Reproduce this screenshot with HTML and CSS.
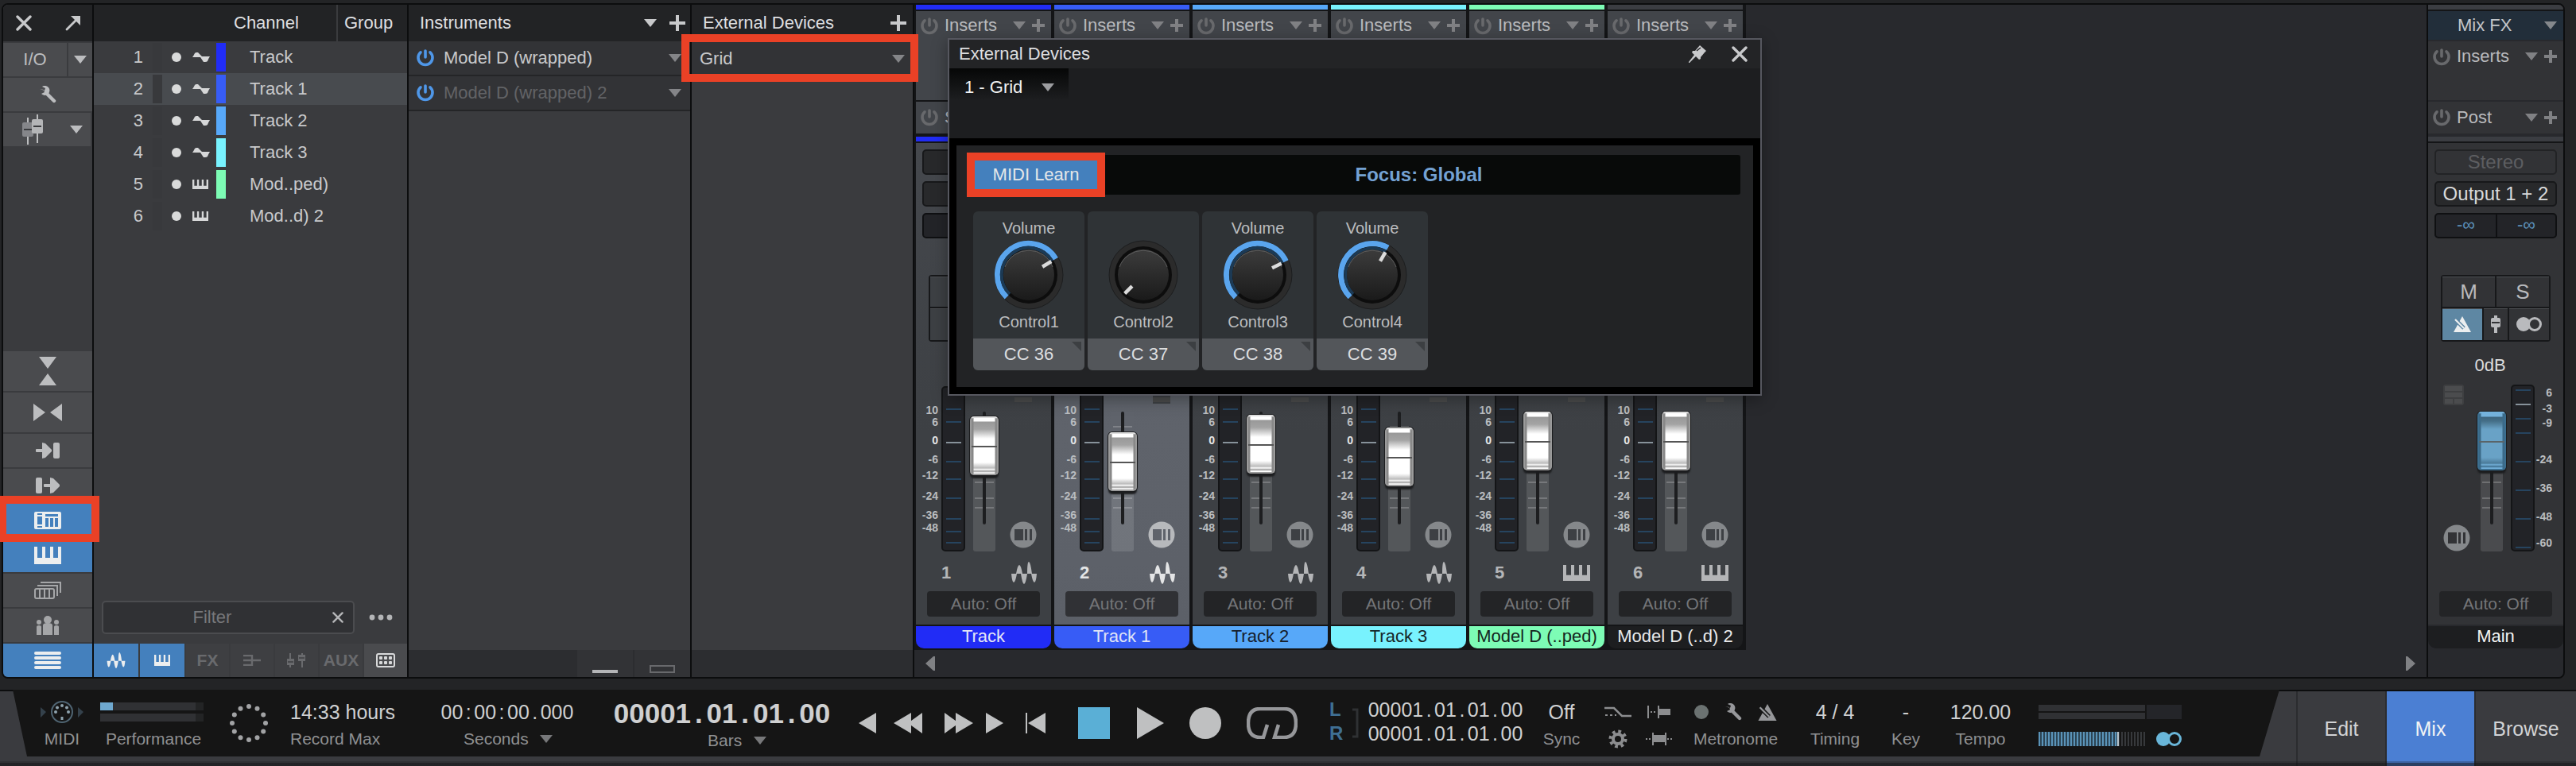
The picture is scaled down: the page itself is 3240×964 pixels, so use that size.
FILE: index.html
```html
<!DOCTYPE html>
<html lang="en">
<head>
<meta charset="utf-8">
<title>Mixer console</title>
<link rel="stylesheet" href="styles.css">
</head>
<body>
<svg class="sprite" aria-hidden="true">
  <symbol id="i-x" viewBox="0 0 20 20"><path d="M2 2 18 18M18 2 2 18" stroke="currentColor" stroke-width="3.4" stroke-linecap="round"/></symbol>
  <symbol id="i-detach" viewBox="0 0 20 20"><path d="M2 18 14 6" stroke="currentColor" stroke-width="2.8" stroke-linecap="round"/><path d="M7 1h12v12z" fill="currentColor"/></symbol>
  <symbol id="i-down" viewBox="0 0 16 10"><path d="M0 0H16L8 10z" fill="currentColor"/></symbol>
  <symbol id="i-plus" viewBox="0 0 16 16"><path d="M8 0V16M0 8H16" stroke="currentColor" stroke-width="4"/></symbol>
  <symbol id="i-plus-lg" viewBox="0 0 20 20"><path d="M10 0V20M0 10H20" stroke="currentColor" stroke-width="4"/></symbol>
  <symbol id="i-power" viewBox="0 0 22 22"><path d="M5 3.8A9 9 0 1 0 17 3.8M11 2V10" fill="none" stroke="currentColor" stroke-width="3.6" stroke-linecap="round"/></symbol>
  <symbol id="i-wrench" viewBox="0 0 22 22"><path d="M10 10 19 19" stroke="currentColor" stroke-width="4.4" stroke-linecap="round"/><path d="M1 4 6 5 7 8 3 10A6 6 0 1 0 4 1L8 3 7 6 1 4z" fill="currentColor"/></symbol>
  <symbol id="i-faders" viewBox="0 0 26 38"><path d="M7 4V38M19 0V36" stroke="currentColor" stroke-width="2"/><rect y="10" width="14" height="18" rx="2" fill="#85868a"/><path d="M2 19H12" stroke="#3a3b3e" stroke-width="2"/><rect x="12" y="6" width="14" height="18" rx="2" fill="#b4b5b7"/><path d="M14 15H24" stroke="#3a3b3e" stroke-width="2"/></symbol>
  <symbol id="i-narrow-v" viewBox="0 0 22 36"><path d="M0 0H22L11 15zM0 36H22L11 21z" fill="currentColor"/></symbol>
  <symbol id="i-narrow-h" viewBox="0 0 36 22"><path d="M0 0V22L15 11zM36 0V22L21 11z" fill="currentColor"/></symbol>
  <symbol id="i-in" viewBox="0 0 30 20"><path d="M0 9q0-1 1-1h7V0l4 1 8 8v2l-8 8-4 1v-8H1q-1 0-1-1z" fill="currentColor"/><rect x="22" width="8" height="20" rx="2" fill="currentColor"/></symbol>
  <symbol id="i-out" viewBox="0 0 30 20"><rect width="8" height="20" rx="2" fill="currentColor"/><path d="M10 9q0-1 1-1h7V0l4 1 8 8v2l-8 8-4 1v-8h-7q-1 0-1-1z" fill="currentColor"/></symbol>
  <symbol id="i-external" viewBox="0 0 34 22"><path fill-rule="evenodd" fill="currentColor" d="M2 0H32Q34 0 34 2V20Q34 22 32 22H2Q0 22 0 20V2Q0 0 2 0zM4 2V4H10V2zM4 6V16H10V6zM4 18V20H10V18zM14 3V6H30V3zM14 8V19H18V8zM20 8V19H24V8zM26 8V19H30V8z"/></symbol>
  <symbol id="i-keys" viewBox="0 0 34 22" preserveAspectRatio="none"><path d="M0 0H4V14H10V0H14V14H20V0H24V14H30V0H34V22H0z" fill="currentColor"/></symbol>
  <symbol id="i-racks" viewBox="0 0 34 22"><g fill="none" stroke="currentColor" stroke-width="2"><rect x="1" y="9" width="24" height="12" rx="2"/><path d="M7 9V21M13 9V21M19 9V21M4 5H29V18M8 1H33V14"/></g></symbol>
  <symbol id="i-people" viewBox="0 0 28 24"><g fill="currentColor"><circle cx="14" cy="5" r="5"/><path d="M8 24V12Q8 9 14 9T20 12V24z"/><circle cx="3" cy="8" r="3"/><path d="M0 24V14Q0 12 3 12T6 14V24z"/><circle cx="25" cy="8" r="3"/><path d="M22 24V14Q22 12 25 12T28 14V24z"/></g></symbol>
  <symbol id="i-list" viewBox="0 0 34 22"><path d="M2 2H32M2 8H32M2 14H32M2 20H32" stroke="currentColor" stroke-width="4" stroke-linecap="round"/></symbol>
  <symbol id="i-wave" viewBox="0 0 22 12"><path d="M0 6Q1 5 3 1 4 0 5 0H7L12 5H22Q20 8 19 11 18 12 16 12H14L10 6z" fill="currentColor"/></symbol>
  <symbol id="i-audio" viewBox="0 0 32 28"><path d="M0 15H6Q8 4 10 4T14 15H20Q20 0 22 0T26 15H32Q31 26 29 26T25 15H20Q18 28 16 28T12 15H7Q5 26 3 26T0 15z" fill="currentColor"/></symbol>
  <symbol id="i-bus" viewBox="0 0 22 14"><path d="M0 1H11V13H0M0 7H22" fill="none" stroke="currentColor" stroke-width="2.4"/></symbol>
  <symbol id="i-vca" viewBox="0 0 24 18"><path d="M4 0V18M19 0V18" stroke="currentColor" stroke-width="2"/><path d="M0 7H9V15H0zM14 2H23V10H14z" fill="currentColor"/><path d="M1 11H8M15 6H22" stroke="#3e3f42" stroke-width="1.4"/></symbol>
  <symbol id="i-grid" viewBox="0 0 24 18"><rect x="1" y="1" width="22" height="16" rx="2" fill="none" stroke="currentColor" stroke-width="2"/><g fill="currentColor"><rect x="4" y="4" width="4" height="4" rx="1"/><rect x="10" y="4" width="4" height="4" rx="1"/><rect x="16" y="4" width="4" height="4" rx="1"/><rect x="4" y="10" width="4" height="4" rx="1"/><rect x="10" y="10" width="4" height="4" rx="1"/><rect x="16" y="10" width="4" height="4" rx="1"/></g></symbol>
  <symbol id="i-dots" viewBox="0 0 30 8"><circle cx="4" cy="4" r="3.4" fill="currentColor"/><circle cx="15" cy="4" r="3.4" fill="currentColor"/><circle cx="26" cy="4" r="3.4" fill="currentColor"/></symbol>
  <symbol id="i-pin" viewBox="0 0 22 22"><path d="M14 0 22 7 20 9 15 15 15 17 13 18 9 14 1 22 0 22 0 21 7 12 4 9 5 7 8 7z" fill="currentColor"/><path d="M10 7 15 3" stroke="#222325" stroke-width="1.5"/></symbol>
  <symbol id="i-metro" viewBox="0 0 22 20"><path d="M11 0 22 20H0z" fill="currentColor"/><path d="M2 4 13 15" stroke="var(--cut,#5e87a3)" stroke-width="5"/><path d="M2 4 13 15" stroke="currentColor" stroke-width="2.2"/></symbol>
  <symbol id="i-fader" viewBox="0 0 12 22"><path d="M4 0H8V22H4z" fill="currentColor"/><rect y="3" width="12" height="12" rx="2" fill="currentColor"/><path d="M1 9H11" stroke="#323336" stroke-width="2"/></symbol>
  <symbol id="i-rings" viewBox="0 0 32 18"><circle cx="9" cy="9" r="9" fill="currentColor"/><circle cx="23" cy="9" r="7.5" fill="var(--hole,#323336)" stroke="currentColor" stroke-width="3"/></symbol>
  <symbol id="i-editor" viewBox="0 0 34 34"><circle cx="17" cy="17" r="16.5" fill="currentColor"/><path d="M6 10H17V24H6zM19 10H22V24H19zM25 10H28V24H25z" fill="var(--hole,#3d4044)"/></symbol>
  <symbol id="i-layers" viewBox="0 0 26 26"><rect width="26" height="26" rx="3" fill="#3e3f41"/><path d="M2 2H24V8H2zM2 10H24V16H2zM2 18H12V24H2zM14 18H24V24H14z" fill="#4b4c4e"/></symbol>
</svg>

<main class="console">
  <nav class="rail">
    <div class="rail__head">
      <button class="btn-plain" aria-label="Close"><svg width="20" height="20"><use href="#i-x"/></svg></button>
      <button class="btn-plain" aria-label="Detach"><svg width="20" height="20"><use href="#i-detach"/></svg></button>
    </div>
    <div class="rail__pair"><button class="tile tile--io">I/O</button><button class="tile" aria-label="I/O menu"><svg width="16" height="10"><use href="#i-down"/></svg></button></div>
    <button class="tile" aria-label="Options"><svg width="22" height="22"><use href="#i-wrench"/></svg></button>
    <button class="tile tile--split" aria-label="Console layout"><svg width="26" height="38"><use href="#i-faders"/></svg><svg width="16" height="10"><use href="#i-down"/></svg></button>
    <div class="rail__bottom">
      <button class="tile tile--tall" aria-label="Small height"><svg width="22" height="36"><use href="#i-narrow-v"/></svg></button>
      <button class="tile tile--tall" aria-label="Narrow"><svg width="36" height="22"><use href="#i-narrow-h"/></svg></button>
      <button class="tile" aria-label="Inputs"><svg width="30" height="20"><use href="#i-in"/></svg></button>
      <button class="tile" aria-label="Outputs"><svg width="30" height="20"><use href="#i-out"/></svg></button>
      <button class="tile tile--on marked" aria-label="External devices"><svg width="34" height="22"><use href="#i-external"/></svg><span class="mark mark--rail"></span></button>
      <button class="tile tile--on" aria-label="Instruments"><svg width="34" height="22"><use href="#i-keys"/></svg></button>
      <button class="tile tile--dim" aria-label="Scenes"><svg width="34" height="22"><use href="#i-racks"/></svg></button>
      <button class="tile tile--dim" aria-label="Groups"><svg width="28" height="24"><use href="#i-people"/></svg></button>
      <button class="tile tile--on" aria-label="Channel list"><svg width="34" height="22"><use href="#i-list"/></svg></button>
    </div>
  </nav>

  <section class="channels">
    <table class="list">
      <colgroup><col class="c-num"><col class="c-meter"><col class="c-dot"><col class="c-icon"><col class="c-color"><col class="c-name"><col></colgroup>
      <thead><tr><th colspan="5"></th><th class="list__name">Channel</th><th class="list__group">Group</th></tr></thead>
      <tbody id="channel-rows"></tbody>
    </table>
    <div class="filter">
      <div class="filter__box"><input type="text" placeholder="Filter" aria-label="Filter"><button class="btn-plain" aria-label="Clear filter"><svg width="14" height="14"><use href="#i-x"/></svg></button></div>
      <button class="btn-plain" aria-label="More"><svg width="30" height="8"><use href="#i-dots"/></svg></button>
    </div>
    <div class="types">
      <button class="tile tile--on" aria-label="Audio"><svg width="26" height="20"><use href="#i-audio"/></svg></button>
      <button class="tile tile--on" aria-label="Instruments"><svg width="20" height="14"><use href="#i-keys"/></svg></button>
      <button class="tile tile--off">FX</button>
      <button class="tile tile--off" aria-label="Bus"><svg width="22" height="14"><use href="#i-bus"/></svg></button>
      <button class="tile tile--off" aria-label="VCA"><svg width="24" height="18"><use href="#i-vca"/></svg></button>
      <button class="tile tile--off">AUX</button>
      <button class="tile" aria-label="Grid"><svg width="24" height="18"><use href="#i-grid"/></svg></button>
    </div>
  </section>

  <section class="rack rack--inst">
    <header class="rack__head"><h2>Instruments</h2><svg width="20" height="10"><use href="#i-down"/></svg><button class="btn-plain" aria-label="Add instrument"><svg width="20" height="20"><use href="#i-plus-lg"/></svg></button></header>
    <div class="device"><svg class="device__power" width="22" height="22"><use href="#i-power"/></svg><span>Model D (wrapped)</span><svg width="18" height="10"><use href="#i-down"/></svg></div>
    <div class="device device--dim"><svg class="device__power" width="22" height="22"><use href="#i-power"/></svg><span>Model D (wrapped) 2</span><svg width="18" height="10"><use href="#i-down"/></svg></div>
    <footer class="rack__foot"><button aria-label="Collapse"><i class="bar-solid"></i></button><button aria-label="Expand"><i class="bar-open"></i></button></footer>
  </section>

  <section class="rack rack--ext">
    <header class="rack__head"><h2>External Devices</h2><button class="btn-plain" aria-label="Add device"><svg width="20" height="20"><use href="#i-plus-lg"/></svg></button></header>
    <div class="device device--ext marked"><span>Grid</span><svg width="20" height="10"><use href="#i-down"/></svg><span class="mark mark--device"></span></div>
    <footer class="rack__foot"></footer>
  </section>

  <section class="mixer">
    <div class="strips" id="strips"></div>
    <div class="scroll"><button class="btn-plain" aria-label="Scroll left"><svg width="12" height="18" viewBox="0 0 12 18"><path d="M12 0V18H10L0 9 10 0z" fill="#808184"/></svg></button><button class="btn-plain" aria-label="Scroll right"><svg width="12" height="18" viewBox="0 0 12 18"><path d="M0 0V18H2L12 9 2 0z" fill="#808184"/></svg></button></div>
  </section>

  <section class="strip strip--main" id="main-strip"></section>
</main>

<section class="dialog" role="dialog" aria-label="External Devices">
  <header class="dialog__head"><h2>External Devices</h2><button class="btn-plain" aria-label="Pin"><svg width="22" height="22"><use href="#i-pin"/></svg></button><button class="btn-plain" aria-label="Close"><svg width="20" height="20"><use href="#i-x"/></svg></button></header>
  <div class="dialog__tabs"><div class="pick"><select aria-label="Device"><option>1 - Grid</option></select><svg width="16" height="10"><use href="#i-down"/></svg></div></div>
  <div class="dialog__body">
    <div class="focus"><button class="learn marked">MIDI Learn<span class="mark mark--learn"></span></button><strong>Focus: Global</strong></div>
    <div class="controls" id="controls"></div>
  </div>
</section>

<footer class="bottom">
  <div class="transport">
    <div class="cell cell--dim">
      <div class="row"><svg width="54" height="30" viewBox="0 0 54 30"><path d="M0 9 7 15 0 22zM47 9 54 15 47 22z" fill="#34414b"/><circle cx="27" cy="15" r="13" fill="none" stroke="#4f6472" stroke-width="2"/><g fill="#8fa3ae"><circle cx="27" cy="7" r="2"/><circle cx="21" cy="9.500" r="2"/><circle cx="33" cy="9.500" r="2"/><circle cx="19" cy="15" r="2"/><circle cx="35" cy="15" r="2"/><path d="M25.500 21h3v4h-3z"/></g></svg></div>
      <div class="row label">MIDI</div>
    </div>
    <div class="cell">
      <div class="row perf"><div class="perf__bar"><i class="perf__fill"></i></div><div class="perf__bar"></div></div>
      <div class="row label label--perf">Performance</div>
    </div>
    <div class="cell cell--mid"><svg class="spinner" width="50" height="50" viewBox="-25 -25 50 50" id="spinner"></svg></div>
    <div class="cell cell--left"><div class="row value">14:33 hours</div><div class="row label">Record Max</div></div>
    <div class="cell"><div class="row value digits">00:00:00.000</div><div class="row label pick-label"><select aria-label="Time format"><option>Seconds</option></select><svg width="16" height="10"><use href="#i-down"/></svg></div></div>
    <div class="cell cell--bars"><div class="row value value--big digits">00001.01.01.00</div><div class="row label pick-label pick-label--bars"><select aria-label="Position format"><option>Bars</option></select><svg width="16" height="10"><use href="#i-down"/></svg></div></div>
    <div class="keys">
      <div class="keys__pair">
        <button class="btn-plain" aria-label="Back"><svg width="22" height="26"><path d="M22 0V26L0 13z" fill="currentColor"/></svg></button>
        <button class="btn-plain" aria-label="Rewind"><svg width="36" height="26"><path d="M22 0V26L0 13zM36 0V26L18 13z" fill="currentColor"/></svg></button>
      </div>
      <div class="keys__pair keys__pair--tight">
        <button class="btn-plain" aria-label="Fast forward"><svg width="36" height="26"><path d="M0 0V26L18 13zM14 0V26L36 13z" fill="currentColor"/></svg></button>
        <button class="btn-plain" aria-label="Forward"><svg width="22" height="26"><path d="M0 0V26L22 13z" fill="currentColor"/></svg></button>
      </div>
      <button class="btn-plain" aria-label="Return to zero"><svg width="25" height="26"><path d="M0 0H2V26H0zM25 0V26L3 13z" fill="currentColor"/></svg></button>
      <div class="keys__main">
        <button class="btn-plain" aria-label="Stop"><svg width="40" height="40"><path d="M0 0H40V40H0z" fill="#5aafd6"/></svg></button>
        <button class="btn-plain" aria-label="Play"><svg width="36" height="40"><path d="M2 0 36 20 2 40z" fill="currentColor"/></svg></button>
        <button class="btn-plain" aria-label="Record"><svg width="40" height="40"><circle cx="20" cy="20" r="20" fill="currentColor"/></svg></button>
        <button class="btn-plain" aria-label="Loop"><svg width="64" height="40"><path d="M26 22 21 38H17Q2 38 2 20T17 2H47Q62 2 62 20T47 38H35L40 22" fill="none" stroke="#96979a" stroke-width="4.500"/></svg></button>
      </div>
    </div>
    <div class="cell cell--lr"><div class="lr"><span>L</span><span>R</span></div><svg width="8" height="38"><path d="M0 2H6V36H0" fill="none" stroke="#2f3133" stroke-width="3"/></svg></div>
    <div class="cell cell--pair"><div class="row value digits">00001.01.01.00</div><div class="row value digits">00001.01.01.00</div></div>
    <div class="cell"><div class="row value">Off</div><div class="row label">Sync</div></div>
    <div class="cell cell--dim">
      <div class="row"><svg width="34" height="14"><path d="M0 2H12L22 12H34" fill="none" stroke="#8c8d8f" stroke-width="2.500"/><path d="M1 11H15" stroke="#8c8d8f" stroke-width="2" stroke-dasharray="3 3"/></svg></div>
      <div class="row"><svg width="24" height="24" viewBox="-12 -12 24 24"><circle r="6" fill="none" stroke="#8c8d8f" stroke-width="4"/><circle r="9.500" fill="none" stroke="#8c8d8f" stroke-width="4" stroke-dasharray="3.700 3.760"/></svg></div>
    </div>
    <div class="cell cell--dim">
      <div class="row"><svg width="30" height="18"><path d="M1 1V17M14 1V17" stroke="#8c8d8f" stroke-width="2"/><path d="M4 9H12" stroke="#8c8d8f" stroke-width="2" stroke-dasharray="2 2"/><path d="M15 5H29V13H15z" fill="#8c8d8f"/></svg></div>
      <div class="row"><svg width="34" height="18"><path d="M9 1V17M25 1V17" stroke="#8c8d8f" stroke-width="2"/><path d="M0 9H8M27 9H34" stroke="#8c8d8f" stroke-width="2" stroke-dasharray="2 2"/><path d="M9 4H25V13H9z" fill="#8c8d8f"/></svg></div>
    </div>
    <div class="cell">
      <div class="row metro"><svg width="18" height="18"><circle cx="9" cy="9" r="9" fill="#6b7271"/></svg><svg width="22" height="22"><use href="#i-wrench"/></svg><svg class="metro__icon" width="24" height="21"><use href="#i-metro"/></svg></div>
      <div class="row label">Metronome</div>
    </div>
    <div class="cell"><div class="row value">4 / 4</div><div class="row label">Timing</div></div>
    <div class="cell"><div class="row value">-</div><div class="row label">Key</div></div>
    <div class="cell"><div class="row value">120.00</div><div class="row label">Tempo</div></div>
    <div class="cell cell--left levels">
      <div class="row levels__top"><div class="levels__bars"><i></i><i></i></div><i class="levels__clip"></i></div>
      <div class="row levels__low"><div class="stripes"><i class="stripes__on"></i></div><svg class="levels__rings" width="34" height="18"><use href="#i-rings"/></svg></div>
    </div>
  </div>
  <nav class="views"><button>Edit</button><button class="views__on">Mix</button><button>Browse</button></nav>
</footer>
<script src="app.js"></script>
</body>
</html>
```

FILE: styles.css
```css
:root {
  --text: #c8c9cb;
  --line: #111214;
  --panel: #3a3b3e;
  --tile: #4a4b4e;
  --blue: #4480bd;
  --mark: #ea4126;
}
* { box-sizing: border-box; }
body {
  margin: 0;
  min-height: 100vh;
  display: flex;
  flex-direction: column;
  padding-top: 4px;
  background: #232426;
  color: var(--text);
  font: 22px/26px "Liberation Sans", Arial, sans-serif;
  position: relative;
  overflow: hidden;
}
h2 { margin: 0; font: inherit; color: #dedfe0; }
svg { display: block; flex: none; }
button, select, input { font: inherit; color: inherit; border: 0; padding: 0; margin: 0; background: none; }
select { appearance: none; }
.sprite { position: absolute; width: 0; height: 0; }
.btn-plain { display: grid; place-items: center; }
.marked { position: relative; }
.mark { position: absolute; z-index: 5; border: 10px solid var(--mark); pointer-events: none; }
.mark--rail { inset: -10px -9px -6px -4px; border-left-width: 8px; }
.mark--device { inset: -9px -7px -7px -13px; }
.mark--learn { inset: -10px; }

.console {
  flex: 1;
  display: flex;
  margin: 0 14px 14px 2px;
  border: 2px solid #0c0d0e;
  border-radius: 8px;
  background: #28292d;
}

.rail { width: 112px; display: flex; flex-direction: column; gap: 2px; background: var(--panel); border-radius: 6px 0 0 6px; }
.rail__head { height: 46px; display: flex; align-items: center; justify-content: space-between; padding: 0 14px 0 16px; background: #222325; border-radius: 6px 0 0; }
.rail__pair { display: grid; grid-template-columns: 80px 1fr; gap: 2px; }
.rail__bottom { margin-top: auto; display: flex; flex-direction: column; gap: 2px; }
.rail__bottom .tile:last-child { border-radius: 0 0 0 6px; }
.tile { height: 42px; display: flex; align-items: center; justify-content: center; background: var(--tile); color: #bcbdbf; }
.tile--tall { height: 50px; }
.tile--split { gap: 34px; padding-left: 14px; margin-right: 2px; }
.tile--dim { color: #a5a6a8; }
.tile--on { background: var(--blue); color: #eceeef; }
.tile--off { background: #3e3f42; color: #696a6d; font-weight: bold; }

.channels { width: 396px; display: flex; flex-direction: column; background: var(--panel); border: solid #0c0d0e; border-width: 0 0 0 2px; }
.list { border-collapse: collapse; table-layout: fixed; width: 100%; text-align: left; }
.list th { height: 46px; padding: 0; background: #222325; color: #dedfe0; font-weight: normal; }
.list td { height: 40px; padding: 0; }
.list svg { color: #d6d7d8; }
.list .list__name { padding-left: 6px; }
.list td.list__name { padding-left: 26px; }
.list .list__group { padding-left: 8px; border-left: 2px solid #3a3b3e; }
.list__num { text-align: right; }
.list td.list__num { padding-right: 10px; }
.list__sel { background: #484b4f; }
.c-num { width: 72px; }
.c-meter { width: 16px; }
.c-dot { width: 32px; }
.c-icon { width: 30px; }
.c-color { width: 20px; }
.c-name { width: 136px; }
.meter-slot, .swatch { display: block; width: 12px; height: 36px; margin: 0 auto; }
.meter-slot { background: #38393c; }
.dot { display: block; width: 12px; height: 12px; border-radius: 50%; margin: 0 auto; background: #d9dada; }
.list__icon svg { margin-left: 4px; }
.filter { margin-top: auto; padding: 0 18px 12px 10px; display: flex; align-items: center; justify-content: space-between; color: #b4b5b7; }
.filter__box { width: 318px; height: 42px; display: flex; align-items: center; padding-right: 12px; border: 2px solid #4b4c4f; border-radius: 5px; background: #303134; }
.filter__box input { flex: 1; min-width: 0; padding-right: 14px; text-align: center; outline: 0; }
.filter__box input::placeholder { color: #77787b; opacity: 1; }
.types { display: flex; gap: 2px; font-size: 21px; }
.types .tile { width: 54px; }
.types .tile--on { width: 56px; }
.types .tile:last-child { flex: 1; color: #d8d9da; }

.rack { display: flex; flex-direction: column; background: var(--panel); border-left: 2px solid #0c0d0e; }
.rack--inst { width: 356px; }
.rack--ext { width: 280px; }
.rack__head { height: 46px; display: flex; align-items: center; gap: 14px; padding: 0 6px 0 14px; background: #222325; }
.rack__head h2, .device span:not(.mark) { flex: 1; }
.rack--ext .rack__head { padding-right: 8px; }
.device { height: 44px; display: flex; align-items: center; gap: 12px; padding: 0 10px; border-bottom: 2px solid #242527; background: #323336; }
.device > svg:last-of-type { color: #848588; }
.device--dim { color: #626366; }
.device .device__power { color: #4f97e8; }
.device--ext { padding: 0 8px 0 10px; border-bottom: 0; }
.rack__foot { margin-top: auto; height: 34px; display: flex; justify-content: flex-end; gap: 2px; background: #2c2d30; }
.rack__foot button { width: 70px; display: flex; align-items: flex-end; justify-content: center; padding-bottom: 5px; background: #323336; }
.bar-solid { width: 32px; height: 4px; background: #b4b5b7; }
.bar-open { width: 32px; height: 10px; border: 2px solid #68696c; }

.mixer { flex: 1; display: flex; flex-direction: column; border: solid #0c0d0e; border-width: 0 2px; min-width: 0; }
.strips { flex: 1; display: flex; align-self: flex-start; gap: 4px; padding: 0 4px 2px 2px; background: #141517; }
.scroll { height: 34px; padding: 0 14px; display: flex; justify-content: space-between; align-items: center; background: #28292d; }

.strip { width: 170px; display: flex; flex-direction: column; --bg: #3d4044; --top: #42454a; color: #b9babd; }
.strip--sel { --bg: #5f636b; }
.strip--main { --bg: #323336; --top: #323336; background: #28292d; border-radius: 0 6px 6px 0; overflow: hidden; }
.strip__band { height: 8px; border-bottom: 2px solid #141517; background: var(--c, #3b3d42); }
.slot { display: flex; align-items: center; gap: 8px; height: 40px; padding: 0 8px 0 6px; background: var(--top); }
.slot > span { flex: 1; }
.slot > svg { color: #808184; }
.slot > svg:first-child { color: #68696c; }
.slot--tall { height: 112px; align-items: flex-start; padding-top: 5px; }
.slot--tall > svg { margin-top: 8px; }
.slot--tall > svg:first-child { margin-top: 3px; }
.slot--tall > svg:last-child { margin-top: 5px; }
.slot + .slot { margin-top: 2px; }
.strip--main .slot--tall { height: 74px; margin-top: 2px; padding-top: 6px; }
.mixfx { height: 36px; display: flex; align-items: center; padding: 0 8px 0 37px; background: #222e3a; color: #c3c6ca; }
.mixfx span { flex: 1; }
.mixfx svg { color: #85888c; }
.strip__band--low { margin-top: 4px; }
.strip__body { flex: 1; display: flex; flex-direction: column; padding-top: 8px; background: linear-gradient(#45484d, var(--bg) 60%); }
.strip--sel .strip__body { background: linear-gradient(#555961, var(--bg) 60%, #5c6068); }
.strip--main .strip__body { background: var(--bg); }
.io { display: flex; flex-direction: column; gap: 8px; padding: 0 8px; color: #d8d9da; font-size: 24px; }
.box { height: 32px; display: grid; grid-auto-flow: column; grid-auto-columns: 1fr; border: 2px solid #17181a; border-radius: 5px; background: #28292b; text-align: center; }
.box select { text-align: center; text-align-last: center; width: 100%; }
.box--faint { color: #5d5e61; background: none; border-color: #222325; }
.box--pan { background: #232428; border-color: #0f1012; color: #5b8fb8; font-size: 22px; line-height: 26px; }
.box--pan span + span { border-left: 2px solid #0f1012; }
.switches { margin: 46px 16px 0; display: grid; gap: 2px; padding: 2px; background: #17181a; border-radius: 4px; color: #b9babd; font-size: 26px; }
.switches__row { display: grid; gap: 2px; grid-template-columns: 1fr 1fr; height: 38px; }
.switches__row + .switches__row { height: 40px; grid-template-columns: 50px 30px 1fr; }
.switches button, .switches i { display: grid; place-items: center; background: var(--bg); box-shadow: inset 0 1px #4d4f53; }
.switches .switches__on { background: #5e87a3; color: #eceeef; }
.db { margin-top: auto; height: 26px; margin-bottom: 11px; text-align: center; padding-right: 14px; color: #dcdddd; }
.desk { height: 210px; display: grid; grid-template-columns: 28px 32px 36px 1fr; column-gap: 4px; font: bold 14px/14px "Liberation Sans", Arial, sans-serif; }
.scale { display: grid; grid-template-rows: 16px 14px 32px 16px 24px 28px 20px 12px; padding-top: 24px; align-content: start; align-items: center; justify-items: end; color: #b9bcbf; }
.scale b { color: #e4e5e6; }
.meter { margin-top: 2px; }
.fader { position: relative; }
.fader svg { position: absolute; inset: 0; }
.fader input { position: absolute; left: 0; top: 34px; width: 36px; height: 176px; appearance: none; writing-mode: vertical-lr; direction: rtl; background: none; }
.fader input::-webkit-slider-runnable-track { width: 36px; height: 176px; background: none; }
.fader input::-webkit-slider-thumb {
  appearance: none; width: 36px; height: 74px; border-radius: 5px;
  border: 2px solid #9b9b9b; border-top: 2px solid #ddd;
  background:
    linear-gradient(#555, #555) 0 35px / 100% 2px no-repeat,
    linear-gradient(90deg, #888 0 2px, transparent 3px 29px, #888 30px),
    linear-gradient(#fff 0 4px, #999 5px, #a4a4a4 14px, #fff 26px, #fff 56px, #bbb 63px, #fff 65px, #999 67px, #fff 69px);
  box-shadow: 0 0 0 1px #1c1d1f, 0 4px 2px #1c1d1f;
}
.strip--main .fader input::-webkit-slider-thumb {
  border-color: #3c6f90; border-top-color: #74b2dc;
  background:
    linear-gradient(#5a6468, #5a6468) 0 35px / 100% 2px no-repeat,
    linear-gradient(90deg, #3b6a88 0 2px, transparent 3px 29px, #3b6a88 30px),
    linear-gradient(#74b2dc 0 4px, #3d657e 5px, #456f88 10px, #69a2c6 20px, #69a2c6 56px, #4b7b99 63px, #74b2dc 65px, #3b6a88 67px, #74b2dc 69px);
}
.side { display: flex; flex-direction: column; align-items: center; justify-content: space-between; padding: 0 10px 4px 2px; color: #85888b; }
.strip--sel .side { --hole: #5f636b; color: #b7b9bc; }
.stack { width: 22px; height: 24px; background: repeating-linear-gradient(#4a4b4b 0 6px, #3d4044 6px 8px); }
.desk--main { grid-template-columns: 62px 36px 36px 22px; column-gap: 0; }
.desk--main .meter { margin: 0 0 0 6px; }
.desk--main .scale { padding: 0; grid-template-rows: 20px 20px 16px 56px 36px 36px 30px; }
.desk--main .scale span:nth-child(4) { align-self: end; line-height: 36px; }
.desk--main .side { --hole: #323336; align-items: flex-start; padding: 0 8px 4px 19px; }
.tag { height: 50px; padding: 4px 18px 0 32px; display: flex; align-items: center; justify-content: space-between; font-weight: bold; color: #b4b5b7; }
.strip--sel .tag { color: #e4e5e6; }
.auto { margin: 0 14px 10px; height: 32px; border-radius: 4px; background: #232426; color: #747578; font-size: 21px; text-align: center; text-align-last: center; }
.strip--sel .auto { background: #303135; }
.name { margin-top: 2px; height: 28px; border-radius: 0 0 10px 10px; background: var(--c, #1d1e20); color: var(--ink, #e8e9ea); text-align: center; line-height: 26px; white-space: nowrap; }
.strip--main .name { margin-bottom: 36px; color: #f2f3f3; }

.dialog { position: absolute; z-index: 4; left: 1192px; top: 48px; width: 1024px; border: 2px solid #56575f; background: #000; box-shadow: 0 4px 18px rgba(0, 0, 0, .35); }
.dialog__head { height: 36px; display: flex; align-items: center; gap: 32px; padding: 0 16px 0 12px; background: #232426; }
.dialog__head h2 { flex: 1; }
.dialog__tabs { height: 88px; background: #1d1e20; }
.pick { width: 150px; height: 40px; display: flex; align-items: center; justify-content: space-between; padding: 8px 18px 0 19px; background: linear-gradient(#060707, #1d1e20); color: #f0f1f1; }
.pick svg { color: #9c9da0; }
.dialog__body { margin: 9px; padding: 12px 16px 21px 21px; background: #222325; }
.focus { display: grid; grid-template-columns: 154px 1fr; align-items: center; height: 50px; margin-left: 2px; border-radius: 3px; background: #080a09; }
.focus strong { font-size: 24px; text-align: center; color: #74a2d3; }
.learn { height: 36px; background: var(--blue); color: #e6e7e8; z-index: 1; }
.controls { display: flex; gap: 4px; margin-top: 21px; }
.control { width: 140px; display: flex; flex-direction: column; align-items: center; padding-top: 8px; border-radius: 6px; overflow: hidden; background: #2f3336; font-size: 20px; color: #bcbdbf; position: relative; }
.control__top { height: 26px; }
.knob { position: relative; margin: 2px 0; }
.knob input { position: absolute; inset: 0; width: 100%; opacity: 0; }
.control__name { height: 34px; }
.control__cc { width: 100%; height: 40px; position: relative; background: #53565a; }
.control__cc select { width: 100%; height: 40px; font-size: 22px; color: #dedfe0; text-align: center; text-align-last: center; }
.control__cc::after { content: ""; position: absolute; right: 4px; top: 4px; border: 6px solid #3c3f42; border-left-color: transparent; border-bottom-color: transparent; }

.bottom { position: relative; height: 96px; display: flex; background: #3a3b3f; }
.bottom::before { content: ""; position: absolute; inset: 0 0 auto 0; height: 2px; background: #0c0d0e; }
.bottom::after { content: ""; position: absolute; inset: auto 0 0 0; height: 6px; background: linear-gradient(rgba(20, 20, 22, .25) 2px, rgba(20, 20, 22, .6) 2px); }
.transport {
  position: relative; flex: 1; height: 84px; margin: 0 21px 0 16px; padding-left: 28px;
  clip-path: polygon(0 0, 100% 0, calc(100% - 25px) 100%, 18px 100%);
  background: #151515;
  display: grid;
  grid-template-columns: 68px 158px 86px 168px 228px 312px 592px 56px 212px 80px 62px 42px 150px 100px 78px 110px 1fr;
}
.cell { display: flex; flex-direction: column; align-items: center; padding-top: 13px; gap: 4px; }
.cell--left { align-items: flex-start; padding-left: 9px; }
.cell--mid { justify-content: center; padding-top: 0; }
.cell--bars { gap: 2px; }
.cell--bars .row:first-child { height: 34px; }
.cell--pair { gap: 0; padding-top: 10px; }
.cell--lr { flex-direction: row; align-items: flex-start; gap: 12px; padding: 12px 8px 0 16px; }
.cell--lr svg { margin-top: 11px; }
.row { height: 30px; display: flex; align-items: center; justify-content: center; white-space: nowrap; }
.label { font-size: 21px; color: #8f9092; }
.label--perf { padding-left: 4px; }
.label select { width: auto; }
.pick-label { gap: 14px; padding-left: 2px; }
.pick-label svg { color: #77787a; }
.pick-label--bars { padding-left: 38px; }
.value { font-size: 25px; color: #cfd0d1; }
.value--big { font-size: 35px; font-weight: bold; }
.digits span { width: 1ch; text-align: center; }
.perf { flex-direction: column; gap: 4px; }
.perf__bar { width: 130px; height: 10px; background: linear-gradient(90deg, #303134 120px, #232425 120px); }
.perf__fill { display: block; width: 16px; height: 10px; background: #6fa9d0; }
.keys { display: flex; align-items: center; gap: 28px; padding-left: 16px; color: #bfc0c1; }
.keys__pair { display: flex; gap: 22px; }
.keys__pair--tight { gap: 16px; }
.keys__main { display: flex; gap: 32px; margin-left: 13px; }
.lr { display: grid; gap: 4px; font-weight: bold; font-size: 24px; color: #3f6f93; }
.metro { gap: 20px; color: #96979a; }
.metro__icon { --cut: #151515; }
.levels { padding-left: 18px; }
.levels__top { gap: 2px; }
.levels__bars { display: grid; gap: 2px; }
.levels__bars i { width: 134px; height: 8px; background: #303134; }
.levels__clip { width: 44px; height: 18px; background: #242529; }
.levels__low { gap: 13px; }
.stripes { width: 134px; height: 18px; background: repeating-linear-gradient(90deg, #37393c 0 2px, #151515 2px 4px); }
.stripes__on { display: block; width: 101px; height: 18px; border-right: 2px solid #b8c6cf; background: repeating-linear-gradient(90deg, #5a93b8 0 2px, #2c4454 2px 4px); }
.levels__rings { color: #69b6d9; --hole: #151515; }
.views { display: grid; grid-template-columns: 112px 112px 128px; padding-top: 2px; font-size: 25px; }
.views button { border-left: 2px solid #2b2c2f; color: #d2d3d5; }
.views .views__on { background: #4b7fd3; color: #f2f3f4; }
```

FILE: app.js
```js
const icon = (id, w, h) =>
  `<svg width="${w}" height="${h}"><use href="#i-${id}"/></svg>`;

const channels = [
  { name: 'Track', color: '#212cf6', ink: '#e4e5f6', kind: 'audio', level: 96 },
  { name: 'Track 1', color: '#375cf6', ink: '#dfe3f6', kind: 'audio', level: 76, selected: true },
  { name: 'Track 2', color: '#57a8f9', ink: '#16202c', kind: 'audio', level: 98 },
  { name: 'Track 3', color: '#78f2fe', ink: '#15272a', kind: 'audio', level: 82 },
  { name: 'Model D (..ped)', short: 'Mod..ped)', color: '#7dfcb5', ink: '#15281f', kind: 'keys', level: 102 },
  { name: 'Model D (..d) 2', short: 'Mod..d) 2', kind: 'keys', level: 102 },
];

document.getElementById('channel-rows').innerHTML = channels.map((c, i) => `
  <tr class="${c.selected ? 'list__sel' : ''}">
    <td class="list__num">${i + 1}</td>
    <td><i class="meter-slot"></i></td>
    <td><i class="dot"></i></td>
    <td class="list__icon">${c.kind === 'audio' ? icon('wave', 22, 12) : icon('keys', 20, 12)}</td>
    <td>${c.color ? `<i class="swatch" style="background:${c.color}"></i>` : ''}</td>
    <td class="list__name">${c.short || c.name}</td>
    <td></td>
  </tr>`).join('');

const meter = (h, ticks, zero) => `<svg class="meter" width="30" height="${h}">
  <rect x="1" y="1" width="28" height="${h - 2}" rx="4" fill="#222327" stroke="#141517" stroke-width="2"/>
  ${ticks.map(y => `<path d="M6 ${y}H25" stroke="${y === zero ? '#87929a' : '#26445f'}" stroke-width="2"/>`).join('')}</svg>`;

const fader = (level, label, body) => `<div class="fader">
  <svg width="36" height="210"><rect x="4" y="34" width="28" height="176" rx="3" fill="#fff" fill-opacity=".12"/>
  <rect x="4" y="34" width="28" height="70" fill="${body}"/>
  <path d="M6 53H30M6 123H30M6 143H30M6 155H30" stroke="#fff" stroke-opacity=".2" stroke-width="2"/>
  <path d="M18 36V174" stroke="#1d1e20" stroke-width="4" stroke-linecap="round"/></svg>
  <input type="range" min="0" max="102" value="${level}" aria-label="${label} volume"></div>`;

const slot = (text, tall) => `<div class="slot ${tall ? 'slot--tall' : ''}">${icon('power', 22, 22)}<span>${text}</span>${icon('down', 16, 10)}${icon('plus', 16, 16)}</div>`;

const auto = '<select class="auto" aria-label="Automation mode"><option>Auto: Off</option></select>';

document.getElementById('strips').innerHTML = channels.map((c, i) => `
  <article class="strip ${c.selected ? 'strip--sel' : ''}" ${c.color ? `style="--c:${c.color};--ink:${c.ink}"` : ''}>
    <div class="strip__band"></div>
    ${slot('Inserts', true)}${slot('Sends')}
    <div class="strip__band strip__band--low"></div>
    <div class="strip__body">
      <div class="io"><div class="box"></div><div class="box"></div><div class="box box--pan"></div></div>
      <div class="switches"><div class="switches__row"><i></i><i></i></div><div class="switches__row"><i></i><i></i><i></i></div></div>
      <div class="db"></div>
      <div class="desk">
        <div class="scale"><span>10</span><span>6</span><b>0</b><span>-6</span><span>-12</span><span>-24</span><span>-36</span><span>-48</span></div>
        ${meter(208, [29, 45, 71, 95, 117, 141, 167, 183, 197], 71)}
        ${fader(c.level, c.name, c.selected ? '#5f636b' : '#3d4044')}
        <div class="side"><i class="stack"></i>${icon('editor', 34, 34)}</div>
      </div>
      <div class="tag"><span>${i + 1}</span>${c.kind === 'audio' ? icon('audio', 32, 28) : icon('keys', 34, 20)}</div>
      ${auto}
    </div>
    <div class="name">${c.name}</div>
  </article>`).join('');

document.getElementById('main-strip').innerHTML = `
  <div class="strip__band"></div>
  <div class="mixfx"><span>Mix FX</span>${icon('down', 16, 10)}</div>
  ${slot('Inserts', true)}${slot('Post')}
  <div class="strip__band strip__band--low"></div>
  <div class="strip__body">
    <div class="io">
      <div class="box box--faint"><select aria-label="Channel format"><option>Stereo</option></select></div>
      <div class="box"><select aria-label="Output"><option>Output 1 + 2</option></select></div>
      <div class="box box--pan"><span>-∞</span><span>-∞</span></div>
    </div>
    <div class="switches">
      <div class="switches__row"><button>M</button><button>S</button></div>
      <div class="switches__row"><button class="switches__on" aria-label="Click">${icon('metro', 22, 20)}</button><button aria-label="Fader">${icon('fader', 12, 22)}</button><button aria-label="Mono">${icon('rings', 32, 18)}</button></div>
    </div>
    <div class="db">0dB</div>
    <div class="desk desk--main">
      <div class="side">${icon('layers', 26, 26)}${icon('editor', 34, 34)}</div>
      ${fader(102, 'Main', '#323336')}
      ${meter(210, [7, 25, 43, 61, 97, 133, 169, 205], 25)}
      <div class="scale"><span>6</span><span>-3</span><span>-9</span><span>-24</span><span>-36</span><span>-48</span><span>-60</span></div>
    </div>
    <div class="tag"></div>
    ${auto}
  </div>
  <div class="name">Main</div>`;

const polar = (r, deg) => {
  const a = (deg - 90) * Math.PI / 180;
  return `${(44 + r * Math.cos(a)).toFixed(1)} ${(44 + r * Math.sin(a)).toFixed(1)}`;
};

const arc = (r, deg) => `M${polar(r, -135)}A${r} ${r} 0 ${deg > 45 ? 1 : 0} 1 ${polar(r, deg)}`;

const knob = deg => `<svg width="88" height="88">
  <defs><linearGradient id="cap" x2="0" y2="1"><stop stop-color="#3c3c3c"/><stop offset="1" stop-color="#1a1a1a"/></linearGradient></defs>
  <circle cx="44" cy="44" r="43" fill="#2b2b2b" stroke="#1d1e1f"/>
  <circle cx="44" cy="44" r="36" fill="#0d0d0d"/>
  ${deg > -135 ? `<path d="${arc(39.5, deg)}" fill="none" stroke="#5aa5ee" stroke-width="7"/>
  <path d="${arc(34, deg)}" fill="none" stroke="#1c3a55" stroke-width="4"/>` : ''}
  <circle cx="44" cy="44" r="32" fill="url(#cap)"/><path d="M14 34A32 32 0 0 1 74 34" fill="none" stroke="#5b5b5b"/>
  <path d="M${polar(20, deg)}L${polar(33, deg)}" stroke="#dcdcdc" stroke-width="4.500"/></svg>`;

document.getElementById('controls').innerHTML = [
  { label: 'Volume', deg: 59, cc: 36 },
  { label: '', deg: -135, cc: 37 },
  { label: 'Volume', deg: 64, cc: 38 },
  { label: 'Volume', deg: 30, cc: 39 },
].map((k, i) => `<div class="control">
  <div class="control__top">${k.label}</div>
  <div class="knob">${knob(k.deg)}<input type="range" min="-135" max="135" value="${k.deg}" aria-labelledby="k${i}"></div>
  <div class="control__name" id="k${i}">Control${i + 1}</div>
  <div class="control__cc"><select aria-label="Control ${i + 1} assignment"><option>CC ${k.cc}</option></select></div>
</div>`).join('');

document.getElementById('spinner').innerHTML = Array.from({ length: 12 }, (_, i) => {
  const a = i * Math.PI / 6;
  return `<circle cx="${(21 * Math.sin(a)).toFixed(1)}" cy="${(21 * Math.cos(a)).toFixed(1)}" r="3" fill="#a2a3a5"/>`;
}).join('');

document.querySelectorAll('.digits').forEach(el => {
  el.innerHTML = el.textContent.replace(/[.:]/g, m => `<span>${m}</span>`);
});
```
